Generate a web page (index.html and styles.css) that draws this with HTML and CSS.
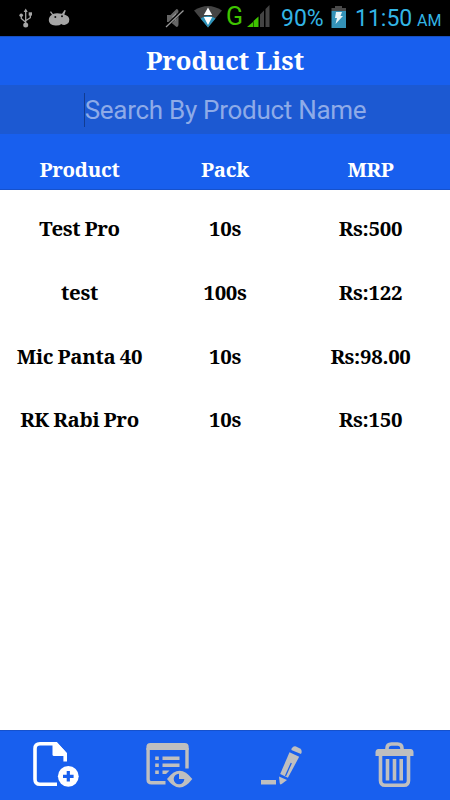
FILE: index.html
```html
<!DOCTYPE html>
<html lang="en">
<head>
<meta charset="utf-8">
<title>Product List</title>
<link rel="stylesheet" href="styles.css">
</head>
<body>
<div class="status">
  <svg class="left-icons" viewBox="0 0 150 36">
    <g fill="none" stroke="#a6a6a6" stroke-width="1.3"><path d="M25.7 10v15M21.3 16v2.5l4.4 3.8M30.3 15v2.7l-4.6 3"/></g>
    <g fill="#a6a6a6"><path d="M25.7 8.5l2 3.5h-4z"/><circle cx="25.7" cy="25" r="2.5"/><circle cx="21.2" cy="15.3" r="1.8"/><path d="M28.7 12.3h3.3v3.3h-3.3z"/>
    <path d="M50 12l1-.7 2 2.6q3-1.3 9-.2l2.6-3.8 1.2.7-1.5 4q5 1.500 5 5 0 5-5 5.300-2 0-3-1-1.800 1.800-6 1.500-6.300-.2-6.500-5.200 0-3.600 3.200-5.500z"/></g>
    <circle cx="55.300" cy="17" r="1" fill="#111"/><circle cx="62" cy="16.300" r="1" fill="#111"/>
  </svg>
  <svg class="radio-icons" viewBox="150 0 75 36">
    <path d="M167 15h3.500l6-6q2 0 2 3v12q0 3-2 3l-6-5H167z" fill="#656565"/><path d="M172 17l4-4v8z" fill="#969696"/>
    <path d="M165.500 27L183 10" stroke="#000" stroke-width="3"/><path d="M166 27L183.500 10.500" stroke="#9a9a9a" stroke-width="1.200"/>
    <path d="M194 10.500Q208 1.500 222 10.500L208 27.500z" fill="#444"/>
    <path d="M200.500 18.500Q208 13 215.500 18.500L208 27.500z" fill="#2c91b8"/>
    <path d="M208 7.500l4.200 7.500h-8.400zM203.800 17h8.400L208 25z" fill="#fff"/>
  </svg>
  <span class="network">G</span>
  <svg class="signal" viewBox="245 0 27 36"><path d="M247 27l6-5v5z" fill="#3fc400"/><path d="M253.500 27v-6l5-4.500V27z" fill="#3fc400"/><path d="M260 27V14.500l4-4V27zM265.500 27V9l4-4v22z" fill="#444"/></svg>
  <span class="percent">90%</span>
  <svg class="battery" viewBox="328 0 22 36"><path d="M335 6h7v2h4v3h-14.500V8h3.500z" fill="#4a4a4a"/><path d="M331.500 11H346v17h-14.500z" fill="#3492b8"/><path d="M336 12h6l-1.500 4h2.500l-7.500 8 1.500-6h-2z" fill="#e8f3f7"/></svg>
  <span class="clock">11:50</span><span class="ampm">AM</span>
</div>
<header class="title"><h1>Product List</h1></header>
<div class="search"><i class="caret"></i><span class="hint">Search By Product Name</span></div>
<div class="row head"><span>Product</span><span>Pack</span><span>MRP</span></div>
<main class="list">
  <div class="row"><span>Test Pro</span><span>10s</span><span>Rs:500</span></div>
  <div class="row"><span>test</span><span>100s</span><span>Rs:122</span></div>
  <div class="row"><span>Mic Panta 40</span><span>10s</span><span>Rs:98.00</span></div>
  <div class="row"><span>RK Rabi Pro</span><span>10s</span><span>Rs:150</span></div>
</main>
<nav class="tabs">
  <svg viewBox="0 730 112.500 70">
    <path d="M65.200 761.500V754L56 743.700H40q-5 0-5 5v30.600q0 5 5 5h17" fill="none" stroke="#fff" stroke-width="3.600"/>
    <path d="M53.500 742.500h3.500l10 10.700v2.800H54q-1.500 0-1.500-1.500v-12z" fill="#fff"/>
    <circle cx="68.300" cy="776.300" r="10.400" fill="#fff"/><path d="M68.300 771v10.600M63 776.300h10.600" stroke="#185fee" stroke-width="3.200"/>
  </svg>
  <svg viewBox="112.500 730 112.500 70">
    <path d="M165 782.800h-14q-3.400 0-3.400-3.400V748M186.500 748v20.500" fill="none" stroke="#bfbfbf" stroke-width="3.400"/>
    <path d="M145.900 750v-3q0-4 4-4h34.300q4 0 4 4v3z" fill="#bfbfbf"/>
    <path d="M154.700 756.500h3.600v3.600h-3.600zM162 756.500h17v3.600h-17zM154.700 763.500h3.600v3.600h-3.600zM162 763.500h17v3.600h-17zM154.700 770.500h3.600v3.600h-3.600zM162 770.500h7l-3.500 3.600H162z" fill="#bfbfbf"/>
    <path d="M166.500 779Q179 762.500 191.800 779 179 796 166.500 779z" fill="#bfbfbf"/><path d="M178.500 773.700v5.300h5.300a5.300 5.300 0 1 1-5.300-5.300z" fill="#185fee"/>
  </svg>
  <svg viewBox="225 730 112.500 70" fill="#bfbfbf">
    <path d="M261 780h15v4.500h-15z"/><path d="M279 776.500l8 3.600-5.300 4q-1.800 1-2-1z"/>
    <path d="M289.500 752.300l9.700 4.500-11.300 21-7.700-3.800z"/>
    <path d="M291.300 763l-5.800 13" stroke="#185fee" stroke-width="1.300" fill="none"/>
    <path d="M291.300 750q1-4.300 4.700-3.600l4 2q2.800 2 1 5.600z"/>
  </svg>
  <svg viewBox="337.500 730 112.500 70" fill="none" stroke="#bfbfbf">
    <path d="M386.500 750v-1.500q0-4.500 4.500-4.500h6q4.500 0 4.500 4.500v1.500" stroke-width="3.600"/>
    <path d="M378 749h32q3 0 3 3.500v3.500h-38v-3.500q0-3.500 3-3.500z" fill="#bfbfbf" stroke="none"/>
    <path d="M380 755v25.500q0 4.800 4.500 4.800h19q4.500 0 4.500-4.800V755" stroke-width="3.600"/>
    <path d="M387 759v21.500M394 759v21.500M400.700 759v21.500" stroke-width="3.600"/>
  </svg>
</nav>
</body>
</html>
```
FILE: styles.css
```css
* { box-sizing: border-box; }
body { margin: 0; width: 450px; height: 800px; display: flex; flex-direction: column; overflow: hidden; background: #fff; font-family: "Noto Serif", "Droid Serif", "DejaVu Serif", serif; font-stretch: condensed; }
svg { display: block; flex: none; }
.status { height: 36px; flex: none; background: #000; display: flex; align-items: center; color: #33b5e5; font-family: Roboto, sans-serif; font-stretch: normal; font-size: 23px; line-height: 36px; white-space: nowrap; }
.status span { flex: none; }
.left-icons { width: 150px; height: 36px; }
.radio-icons { width: 75px; height: 36px; }
.network { width: 20px; padding: 0 0 2px 1px; color: #3fc400; font-size: 25px; }
.signal { width: 27px; height: 36px; }
.percent { width: 56px; padding: 2px 0 0 9px; }
.battery { width: 22px; height: 36px; }
.clock { width: 67px; padding: 2px 0 0 5px; }
.ampm { font-size: 16px; padding-top: 5px; }
.title { height: 49px; flex: none; background: #185fee; border-top: 1px solid #174fbf; color: #fff; text-align: center; }
.title h1 { margin: 0; font-size: 25.7px; line-height: 48px; font-weight: 700; word-spacing: -0.5px; }
.search { height: 49px; flex: none; background: #1c59d2; display: flex; align-items: center; justify-content: center; font-family: Roboto, sans-serif; font-stretch: normal; font-size: 26px; letter-spacing: -0.28px; color: #8eabe8; white-space: nowrap; }
.caret { width: 1px; height: 34px; background: #123c91; }
.row { height: 63.75px; display: grid; grid-template-columns: 159px 132px 159px; align-items: center; text-align: center; font-size: 20.4px; font-weight: 700; color: #000; white-space: nowrap; word-spacing: -0.7px; letter-spacing: -0.3px; }
.head { height: 56px; flex: none; background: #185fee; border-bottom: 1px solid #1651cc; color: #fff; padding-top: 15px; }
.list { flex: 1; padding-top: 6.2px; }
.tabs { height: 70px; flex: none; display: flex; background: #185fee; border-top: 1px solid #1651cc; }
.tabs svg { width: 112.5px; height: 70px; margin-top: -1px; }
```
